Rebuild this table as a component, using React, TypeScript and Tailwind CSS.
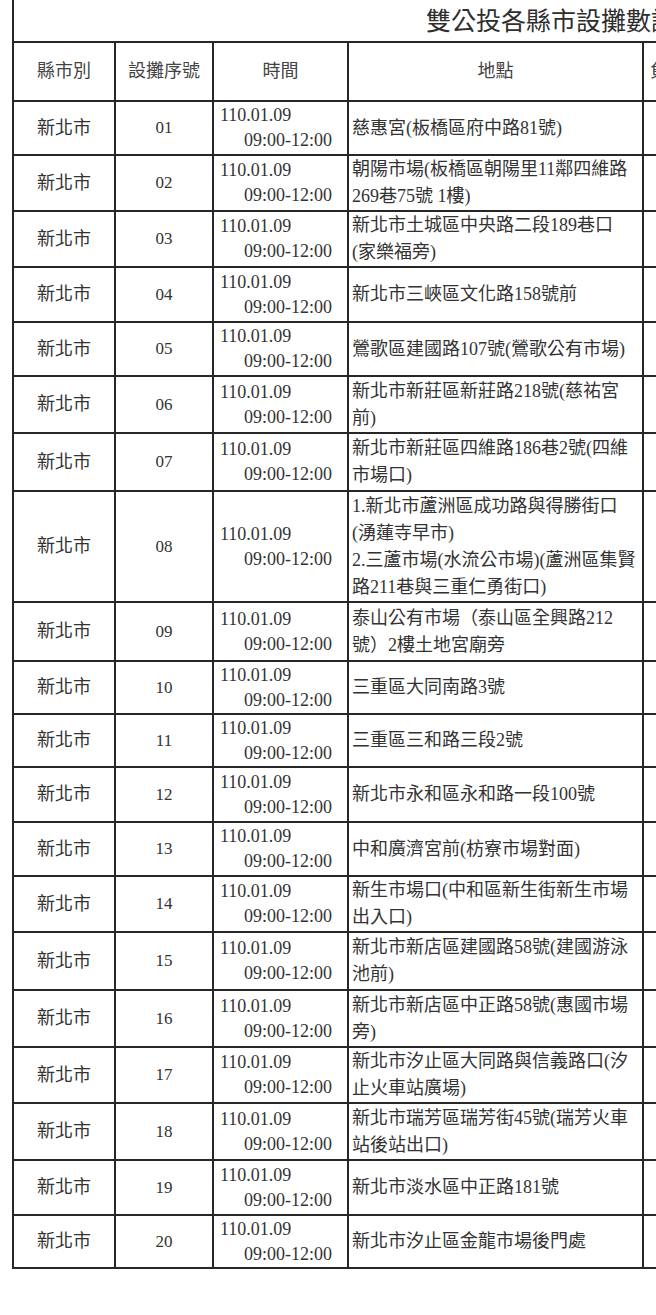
import React from 'react';

type Row = {
  seq: string;
  lines: string[];
  h: string;
};

const rows: Row[] = [
  { seq: '01', lines: ['慈惠宮(板橋區府中路81號)'], h: 'h-[54px]' },
  { seq: '02', lines: ['朝陽市場(板橋區朝陽里11鄰四維路', '269巷75號 1樓)'], h: 'h-[56px]' },
  { seq: '03', lines: ['新北市土城區中央路二段189巷口', '(家樂福旁)'], h: 'h-[56px]' },
  { seq: '04', lines: ['新北市三峽區文化路158號前'], h: 'h-[55px]' },
  { seq: '05', lines: ['鶯歌區建國路107號(鶯歌公有市場)'], h: 'h-[54px]' },
  { seq: '06', lines: ['新北市新莊區新莊路218號(慈祐宮', '前)'], h: 'h-[57px]' },
  { seq: '07', lines: ['新北市新莊區四維路186巷2號(四維', '市場口)'], h: 'h-[58px]' },
  {
    seq: '08',
    lines: [
      '1.新北市蘆洲區成功路與得勝街口',
      '(湧蓮寺早市)',
      '2.三蘆市場(水流公市場)(蘆洲區集賢',
      '路211巷與三重仁勇街口)',
    ],
    h: 'h-[111px]',
  },
  { seq: '09', lines: ['泰山公有市場（泰山區全興路212', '號）2樓土地宮廟旁'], h: 'h-[59px]' },
  { seq: '10', lines: ['三重區大同南路3號'], h: 'h-[53px]' },
  { seq: '11', lines: ['三重區三和路三段2號'], h: 'h-[53px]' },
  { seq: '12', lines: ['新北市永和區永和路一段100號'], h: 'h-[55px]' },
  { seq: '13', lines: ['中和廣濟宮前(枋寮市場對面)'], h: 'h-[54px]' },
  { seq: '14', lines: ['新生市場口(中和區新生街新生市場', '出入口)'], h: 'h-[56px]' },
  { seq: '15', lines: ['新北市新店區建國路58號(建國游泳', '池前)'], h: 'h-[58px]' },
  { seq: '16', lines: ['新北市新店區中正路58號(惠國市場', '旁)'], h: 'h-[57px]' },
  { seq: '17', lines: ['新北市汐止區大同路與信義路口(汐', '止火車站廣場)'], h: 'h-[56px]' },
  { seq: '18', lines: ['新北市瑞芳區瑞芳街45號(瑞芳火車', '站後站出口)'], h: 'h-[57px]' },
  { seq: '19', lines: ['新北市淡水區中正路181號'], h: 'h-[55px]' },
  { seq: '20', lines: ['新北市汐止區金龍市場後門處'], h: 'h-[53px]' },
];

const cell = 'flex items-center border-r-2 border-[#262626] shrink-0';

export default function App() {
  return (
    <div
      className="w-[656px] h-[1315px] overflow-hidden bg-white text-[#333]"
      style={{ fontFamily: '"Liberation Serif", "Noto Sans CJK TC", serif' }}
    >
      <div className="ml-[12px] w-[830px] border-l-2 border-[#262626]">
        {/* title row, top edge is cut off in the scan */}
        <div className="h-[43px] flex items-center border-b-2 border-[#262626] pl-[412px]">
          <span className="text-[25px] leading-none whitespace-nowrap text-[#2e2e2e] mt-[1px]">
            雙公投各縣市設攤數調查表
          </span>
        </div>

        {/* header */}
        <div className="h-[59px] flex border-b-2 border-[#262626] text-[18px] text-[#444]">
          <div className={`${cell} w-[102px] justify-center`}>縣市別</div>
          <div className={`${cell} w-[98px] justify-center`}>設攤序號</div>
          <div className={`${cell} w-[135px] justify-center`}>時間</div>
          <div className={`${cell} w-[295px] justify-center`}>地點</div>
          <div className={`${cell} w-[196px] pl-[6px]`}>負責單位</div>
        </div>

        {rows.map((r) => (
          <div key={r.seq} className={`${r.h} flex border-b-2 border-[#262626]`}>
            <div className={`${cell} w-[102px] justify-center text-[18px]`}>新北市</div>
            <div className={`${cell} w-[98px] justify-center text-[17px]`}>{r.seq}</div>
            <div className={`${cell} w-[135px] flex-col justify-center items-stretch text-[18px] leading-[25px]`}>
              <div className="pl-[6px] text-left">110.01.09</div>
              <div className="pr-[15px] text-right">09:00-12:00</div>
            </div>
            <div className={`${cell} w-[295px] flex-col justify-center items-start pl-[3px] text-[18px] leading-[27px]`}>
              {r.lines.map((l) => (
                <div key={l} className="whitespace-nowrap">
                  {l}
                </div>
              ))}
            </div>
            <div className={`${cell} w-[196px]`} />
          </div>
        ))}
      </div>
    </div>
  );
}
